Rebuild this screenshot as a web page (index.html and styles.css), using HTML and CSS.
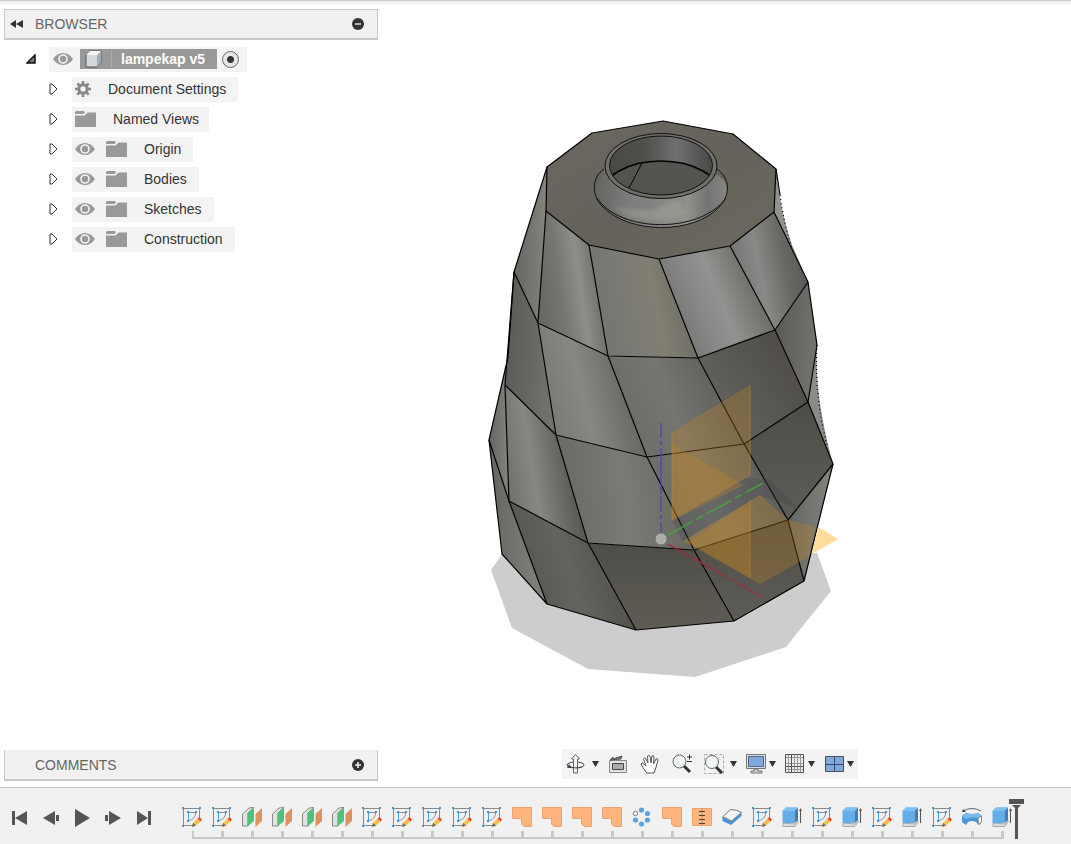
FILE: index.html
```html
<!DOCTYPE html>
<html lang="en">

<head>
  <meta charset="UTF-8">
  <meta name="viewport" content="width=device-width, initial-scale=1.0">
  <title>lampekap v5</title>
  <link rel="stylesheet" href="styles.css">
</head>

<body>
  <!-- Icon definitions -->
  <svg class="defs" width="0" height="0" aria-hidden="true">
    <symbol id="eye" viewBox="0 0 20 14">
      <path d="M0 7C5-1 15-1 20 7C15 15 5 15 0 7Z" fill="#999" />
      <circle cx="10" cy="7" r="4" fill="none" stroke="#f3f3f3" stroke-width="1.600" />
      <circle cx="10" cy="7" r="1.800" fill="#999" />
    </symbol>
    <symbol id="folder" viewBox="0 0 22 16">
      <path d="M0 1.500Q0 0 1.500 0H9L10 1.500L8.500 3H0Z" fill="#999" />
      <path d="M0 4.500H9.500L12.500 1.500H21V16H0Z" fill="#999" />
    </symbol>
    <symbol id="closed" viewBox="0 0 9 12">
      <path d="M1 1V11H3L8 6L3 1Z" fill="#fff" stroke="#333" />
    </symbol>
    <symbol id="sketch" viewBox="0 0 20 20">
      <path d="M1.500 1.500H17.500V11M1.500 1.500V18.500H11" fill="none" stroke="#8a8a8a" />
      <path d="M6.500 5.500H13.500C13.500 10 11 13 6.500 13.500Z" fill="none" stroke="#8a8a8a" />
      <path d="M6.500 6V13" stroke="#4aa3e8" />
      <path d="M0 0h2v2h-2zM17 0h2v2h-2zM0 18h2v2h-2zM5 4h2v2h-2zM13 4h2v2h-2zM5 13h2v2h-2z" fill="#3b97e3" />
      <path d="M10 20L11 16L16 11L19 14L14 18.500Z" fill="#f3c04d" />
      <path d="M10 20L11 16L14 18.500Z" fill="#666" />
      <path d="M15.500 11.500L17.500 10L20 12.500L18.500 14.500Z" fill="#e8453c" />
    </symbol>
    <symbol id="plane" viewBox="0 0 20 20">
      <path d="M.500 7L7 1L12 .500L6 6V19H.500Z" fill="#e2e2e2" stroke="#888" />
      <path d="M5.500 6L12 .500V14L5.500 19.500Z" fill="#4fc17c" />
      <path d="M13.500 7L20 1V14L13.500 20Z" fill="#dc9360" />
    </symbol>
    <symbol id="flange" viewBox="0 0 20 20">
      <path d="M.500 .500H19.500V19.500H12L9.500 17V11.500H.500Z" fill="#ffb47d" stroke="#eba373" />
    </symbol>
    <symbol id="pattern" viewBox="0 0 20 20">
      <g fill="#5ba5d9">
        <circle cx="9.500" cy="3" r="2.600" />
        <circle cx="15.500" cy="6.500" r="2.600" />
        <circle cx="15.500" cy="13" r="2.600" />
        <circle cx="9.500" cy="17" r="2.600" />
        <circle cx="3.500" cy="13" r="2.600" />
      </g>
      <circle cx="3.500" cy="6.500" r="2.200" fill="#fff" stroke="#777" />
    </symbol>
    <symbol id="stitch" viewBox="0 0 20 20">
      <path d="M.500 1.500H19.500V18.500H.500Z" fill="#ffb47d" stroke="#eba373" />
      <path d="M10 1V19" stroke="#d89060" />
      <path d="M7 4.500H13M7 8.500H13M7 12.500H13M7 16.500H13" stroke="#444" />
    </symbol>
    <symbol id="shell" viewBox="0 0 20 20">
      <path d="M.500 10V14L9 18L19.500 9V5.500L9 14Z" fill="#4a96d4" />
      <path d="M.500 10L8.500 2.500Q15 2.500 19.500 5.500L9.500 14Q5 11 .500 10Z" fill="#f5f5f5" stroke="#777" />
    </symbol>
    <symbol id="extrude" viewBox="0 0 20 20">
      <path d="M1 16L13 17L16 13V15L13 19.500H1Z" fill="#ddd" stroke="#aaa" />
      <path d="M.500 4L4 .500H16L12.500 4V16H.500Z" fill="#62adea" />
      <path d="M12.500 4L16 .500V13L12.500 16Z" fill="#3d80bd" />
      <path d="M.500 4L4 .500H16L12.500 4Z" fill="#7fc0f2" />
      <path d="M18.500 2V16" stroke="#555" />
      <path d="M17 4L18.500 1L20 4Z" fill="#555" />
    </symbol>
    <symbol id="bend" viewBox="0 0 20 20">
      <path d="M1 4Q10-1 19 4" fill="none" stroke="#666" />
      <path d="M0 5L1 2L4 5Z" fill="#444" />
      <path d="M0 9L4 6Q10 8 16 6L20 9V15L17 18L14 15Q10 13 6 15L4 18L0 15Z" fill="#4a96d4" />
      <path d="M0 9L4 6Q10 8 16 6L20 9L16 11Q10 9 4 12Z" fill="#76bbef" />
      <path d="M16 11L19.500 9V15L16.500 17.500Z" fill="#fff" stroke="#888" />
    </symbol>
    <symbol id="caret" viewBox="0 0 7 6">
      <path d="M0 0H7L3.500 6Z" fill="#333" />
    </symbol>
  </svg>

  <main class="workspace">
    <aside class="sidebar">
      <section class="browser">
        <header class="panel-bar">
          <button class="icon-button collapse" aria-label="Collapse browser">
            <svg width="13" height="8" viewBox="0 0 13 8"><path d="M6 0V8L0 4ZM13 0V8L6 4Z" fill="#333" /></svg>
          </button>
          <h2>BROWSER</h2>
          <button class="icon-button" aria-label="Hide browser">
            <svg width="12" height="12" viewBox="0 0 12 12"><circle cx="6" cy="6" r="6" fill="#333" /><path d="M3 6H9" stroke="#ddd" stroke-width="1.500" /></svg>
          </button>
        </header>

        <ul class="tree">
          <li class="root">
            <button class="icon-button toggle" aria-label="Collapse lampekap v5">
              <svg width="10" height="10" viewBox="0 0 10 10"><path d="M1 9H9V1Z" fill="#777" stroke="#111" stroke-width="1.500" /></svg>
            </button>
            <div class="node">
              <button class="icon-button" aria-label="Show or hide"><svg width="20" height="14"><use href="#eye" /></svg></button>
              <label class="document" for="active">
                <span class="cube">
                  <svg width="18" height="18" viewBox="0 0 18 18">
                    <path d="M1 5L5 1H16V12L12 17H1Z" fill="#d5d9dc" stroke="#555" />
                    <path d="M12 5L16 1V12L12 17Z" fill="#a4abb0" />
                    <path d="M1 5L5 1H16L12 5Z" fill="#f4f4f4" />
                  </svg>
                </span>
                <span class="title">lampekap v5</span>
              </label>
              <input type="radio" id="active" name="active" checked>
            </div>
          </li>
          <li>
            <button class="icon-button toggle" aria-label="Expand Document Settings"><svg width="9" height="12"><use href="#closed" /></svg></button>
            <div class="node settings">
              <svg width="16" height="16" viewBox="0 0 16 16">
                <circle cx="8" cy="8" r="4.200" fill="none" stroke="#888" stroke-width="3" />
                <path d="M8 0V3M8 13V16M0 8H3M13 8H16M2.300 2.300L4.500 4.500M11.500 11.500L13.700 13.700M2.300 13.700L4.500 11.500M11.500 4.500L13.700 2.300" stroke="#888" stroke-width="2.600" />
              </svg>
              <span>Document Settings</span>
            </div>
          </li>
          <li>
            <button class="icon-button toggle" aria-label="Expand Named Views"><svg width="9" height="12"><use href="#closed" /></svg></button>
            <div class="node views">
              <svg width="22" height="16"><use href="#folder" /></svg>
              <span>Named Views</span>
            </div>
          </li>
          <li>
            <button class="icon-button toggle" aria-label="Expand Origin"><svg width="9" height="12"><use href="#closed" /></svg></button>
            <div class="node">
              <button class="icon-button" aria-label="Show or hide Origin"><svg width="20" height="14"><use href="#eye" /></svg></button>
              <svg width="22" height="16"><use href="#folder" /></svg>
              <span>Origin</span>
            </div>
          </li>
          <li>
            <button class="icon-button toggle" aria-label="Expand Bodies"><svg width="9" height="12"><use href="#closed" /></svg></button>
            <div class="node">
              <button class="icon-button" aria-label="Show or hide Bodies"><svg width="20" height="14"><use href="#eye" /></svg></button>
              <svg width="22" height="16"><use href="#folder" /></svg>
              <span>Bodies</span>
            </div>
          </li>
          <li>
            <button class="icon-button toggle" aria-label="Expand Sketches"><svg width="9" height="12"><use href="#closed" /></svg></button>
            <div class="node">
              <button class="icon-button" aria-label="Show or hide Sketches"><svg width="20" height="14"><use href="#eye" /></svg></button>
              <svg width="22" height="16"><use href="#folder" /></svg>
              <span>Sketches</span>
            </div>
          </li>
          <li>
            <button class="icon-button toggle" aria-label="Expand Construction"><svg width="9" height="12"><use href="#closed" /></svg></button>
            <div class="node">
              <button class="icon-button" aria-label="Show or hide Construction"><svg width="20" height="14"><use href="#eye" /></svg></button>
              <svg width="22" height="16"><use href="#folder" /></svg>
              <span>Construction</span>
            </div>
          </li>
        </ul>
      </section>

      <section class="panel-bar comments">
        <h2>COMMENTS</h2>
        <button class="icon-button" aria-label="Show comments">
          <svg width="12" height="12" viewBox="0 0 12 12"><circle cx="6" cy="6" r="6" fill="#333" /><path d="M3 6H9M6 3V9" stroke="#f0f0f0" stroke-width="1.600" /></svg>
        </button>
      </section>
    </aside>

    <section class="stage">
      <svg class="model" viewBox="470 100 380 600" role="img" aria-label="Faceted lamp shade model">
        <defs>
          <linearGradient id="gTop" x1="0" y1="0" x2="1" y2="1"><stop offset="0" stop-color="#6c6962" /><stop offset=".5" stop-color="#65625b" /><stop offset="1" stop-color="#6c695f" /></linearGradient>
          <linearGradient id="gA" x1="0" y1="0" x2="1" y2="0"><stop offset="0" stop-color="#646461" /><stop offset="1" stop-color="#85857f" /></linearGradient>
          <linearGradient id="gB" x1="0" y1=".6" x2="1" y2=".3"><stop offset="0" stop-color="#666662" /><stop offset=".3" stop-color="#757572" /><stop offset=".58" stop-color="#8d8d8a" /><stop offset=".8" stop-color="#72726e" /><stop offset="1" stop-color="#5f5f5b" /></linearGradient>
          <linearGradient id="gC" x1="0" y1=".6" x2="1" y2=".4"><stop offset="0" stop-color="#737370" /><stop offset=".35" stop-color="#7b7a74" /><stop offset=".6" stop-color="#817e72" /><stop offset="1" stop-color="#6b6963" /></linearGradient>
          <linearGradient id="gD" x1="0" y1=".6" x2="1" y2=".2"><stop offset="0" stop-color="#6e6e6b" /><stop offset=".3" stop-color="#868684" /><stop offset=".5" stop-color="#929290" /><stop offset=".75" stop-color="#73736f" /><stop offset="1" stop-color="#575652" /></linearGradient>
          <linearGradient id="gE" x1="0" y1=".5" x2="1" y2=".2"><stop offset="0" stop-color="#70706d" /><stop offset=".35" stop-color="#898a87" /><stop offset=".65" stop-color="#696965" /><stop offset="1" stop-color="#53524d" /></linearGradient>
          <linearGradient id="gF" x1="0" y1="0" x2="1" y2=".2"><stop offset="0" stop-color="#585955" /><stop offset="1" stop-color="#71726e" /></linearGradient>
          <linearGradient id="gG" x1="0" y1=".6" x2="1" y2=".3"><stop offset="0" stop-color="#777672" /><stop offset=".4" stop-color="#878783" /><stop offset=".7" stop-color="#70706b" /><stop offset="1" stop-color="#5c5b57" /></linearGradient>
          <linearGradient id="gH" x1="0" y1=".6" x2="1" y2=".3"><stop offset="0" stop-color="#696965" /><stop offset=".45" stop-color="#757571" /><stop offset="1" stop-color="#585753" /></linearGradient>
          <linearGradient id="gI" x1="0" y1=".9" x2="1" y2=".2"><stop offset="0" stop-color="#686762" /><stop offset="1" stop-color="#4d4a45" /></linearGradient>
          <linearGradient id="gK" x1="0" y1=".7" x2="1" y2=".4"><stop offset="0" stop-color="#6c6c68" /><stop offset=".35" stop-color="#878784" /><stop offset=".65" stop-color="#676763" /><stop offset="1" stop-color="#474641" /></linearGradient>
          <linearGradient id="gL" x1="0" y1=".5" x2="1" y2=".4"><stop offset="0" stop-color="#696964" /><stop offset=".5" stop-color="#7b7b76" /><stop offset="1" stop-color="#65645f" /></linearGradient>
          <linearGradient id="gN" x1="0" y1="0" x2="0" y2="1"><stop offset="0" stop-color="#4f4d48" /><stop offset="1" stop-color="#5d5c57" /></linearGradient>
          <linearGradient id="gO" x1="0" y1=".6" x2="1" y2=".3"><stop offset="0" stop-color="#53524c" /><stop offset=".45" stop-color="#64645f" /><stop offset="1" stop-color="#4a4843" /></linearGradient>
          <linearGradient id="gP" x1="0" y1="0" x2="0" y2="1"><stop offset="0" stop-color="#4f4d47" /><stop offset="1" stop-color="#5e5c55" /></linearGradient>
          <linearGradient id="gNeck" x1="0" y1="0" x2="1" y2="0"><stop offset="0" stop-color="#63635f" /><stop offset=".25" stop-color="#7b7d7b" /><stop offset=".5" stop-color="#858583" /><stop offset=".7" stop-color="#90908c" /><stop offset=".85" stop-color="#737572" /><stop offset="1" stop-color="#878783" /></linearGradient>
          <linearGradient id="gHole" x1="0" y1="0" x2="1" y2="0"><stop offset="0" stop-color="#484844" /><stop offset=".35" stop-color="#50504d" /><stop offset=".65" stop-color="#6f7170" /><stop offset="1" stop-color="#484846" /></linearGradient>
          <clipPath id="hole"><ellipse cx="661" cy="165.500" rx="51.500" ry="29.500" /></clipPath>
          <filter id="soft"><feGaussianBlur stdDeviation="2" /></filter>
        </defs>

        <!-- ground shadow -->
        <path d="M502 554L491 570L512 628L588 669L695 677L786 647L831 591L817 553Z" fill="#cdcdcd" />

        <!-- rounded edges behind the front faces -->
        <path d="M776 169Q780 210 792 245L808 282L774 212Z" fill="#92938e" />
        <path d="M817 345Q814 395 833 464L808 402Z" fill="#8b8c87" />

        <g class="faces">
          <path fill="url(#gA)" d="M547 167L546 211L538 323L514 272Z" />
          <path fill="url(#gB)" d="M546 211L589 245L608 356L538 323Z" />
          <path fill="url(#gC)" d="M589 245L659 259L698 358L608 356Z" />
          <path fill="url(#gD)" d="M659 259L730 246L775 330L698 358Z" />
          <path fill="url(#gE)" d="M730 246L774 212L808 282L775 330Z" />
          <path fill="url(#gF)" d="M514 272L538 323L556 435L505 385Z" />
          <path fill="url(#gG)" d="M538 323L608 356L647 457L556 435Z" />
          <path fill="url(#gH)" d="M608 356L698 358L744 444L647 457Z" />
          <path fill="url(#gI)" d="M698 358L775 330L808 402L744 444Z" />
          <path fill="url(#gF)" d="M775 330L808 282L817 345L808 402Z" />
          <path fill="url(#gA)" d="M508 357L505 385L509 501L489 440Z" />
          <path fill="url(#gK)" d="M505 385L556 435L588 543L509 501Z" />
          <path fill="url(#gL)" d="M556 435L647 457L694 550L588 543Z" />
          <path fill="url(#gH)" d="M647 457L744 444L788 520L694 550Z" />
          <path fill="url(#gN)" d="M744 444L808 402L833 464L788 520Z" />
          <path fill="url(#gA)" d="M489 440L509 501L547 604L502 554Z" />
          <path fill="url(#gO)" d="M509 501L588 543L636 630L547 604Z" />
          <path fill="url(#gP)" d="M588 543L694 550L734 621L636 630Z" />
          <path fill="url(#gN)" d="M694 550L788 520L804 581L734 621Z" />
          <path fill="url(#gA)" d="M833 464L804 581L788 520Z" />
          <path fill="url(#gTop)" d="M663 121L733 134L776 169L774 212L730 246L659 259L589 245L546 211L547 167L592 133Z" />
        </g>

        <!-- neck and opening -->
        <path d="M605 175C592 181 591 197 602 206C629 235 695 234 719 207C731 196 730 182 717 175Z" fill="url(#gNeck)" />
        <path d="M612 206Q632 212 655 210Q672 199 681 202Q680 210 690 212Q676 221 660 221Q632 220 612 206Z" fill="#a09d94" opacity=".6" filter="url(#soft)" />
        <path d="M604 169C592 177 591 195 602 206C629 235 695 234 719 207C731 195 730 178 717 169" fill="none" stroke="#111" />
        <path d="M597 198C620 233 700 234 726 198" fill="none" stroke="#111" />
        <ellipse cx="661" cy="166" rx="56" ry="32.500" fill="#706f6a" stroke="#111" />
        <ellipse cx="661" cy="165.500" rx="51.500" ry="29.500" fill="url(#gHole)" />
        <g clip-path="url(#hole)">
          <ellipse cx="661" cy="196" rx="60" ry="35" fill="#55534f" stroke="#000" stroke-width="1.600" />
          <path d="M642 163L629 188" stroke="#000" />
        </g>
        <ellipse cx="661" cy="165.500" rx="51.500" ry="29.500" fill="none" stroke="#111" />

        <!-- model edges -->
        <g fill="none" stroke="#000" stroke-width="1.200" stroke-linejoin="round">
          <path d="M663 121L733 134L776 169L774 212L730 246L659 259L589 245L546 211L547 167L592 133Z" />
          <path d="M547 167L514 272L508 357L489 440L502 554L547 604L636 630L734 621L804 581L833 464L808 402L817 345L808 282L774 212" />
          <path d="M776 169L780 195" />
          <path d="M514 272L538 323L608 356L698 358L775 330L808 282" />
          <path d="M505 385L556 435L647 457L744 444L808 402" />
          <path d="M509 501L588 543L694 550L788 520L833 464" />
          <path d="M514 272L505 385L509 501" />
          <path d="M489 440L509 501L547 604" />
          <path d="M546 211L538 323L556 435L588 543L636 630" />
          <path d="M589 245L608 356L647 457L694 550L734 621" />
          <path d="M659 259L698 358L744 444L788 520L804 581" />
          <path d="M730 246L775 330L808 402" />
          <path d="M780 195Q784 225 792 248M817 345Q814 395 827 445" stroke-dasharray="1 3" />
        </g>

        <!-- construction planes -->
        <path d="M672 521L746 478L770 480L800 510L760 495L683 541Z" fill="#41404a" opacity=".25" />
        <g fill="#c98a1c" fill-opacity=".28">
          <path d="M672 432L750 385V476L672 520Z" />
          <path d="M672 444L744 485L672 521Z" />
          <path d="M814 526L788 520L760 495L683 541L760 584L810 556Z" />
          <path d="M688 542L750 502V578Z" />
        </g>
        <path d="M818 527L838 539L812 554Z" fill="#ffdc9c" />
        <path d="M672 432V520M750 385V476M750 500V578" stroke="#b88b37" opacity=".6" />

        <!-- origin axes -->
        <path d="M661 423V535" stroke="#4a44b8" stroke-width="1.600" stroke-dasharray="15 3 4 3 46 3" opacity=".8" />
        <path d="M668 535L763 483" stroke="#3fae35" stroke-width="1.600" stroke-dasharray="28 4 8 4" opacity=".75" />
        <path d="M668 544L762 597" stroke="#a52a35" stroke-width="1.500" stroke-dasharray="24 2 42 3 5 3" opacity=".8" />
        <circle cx="661" cy="539" r="6" fill="#aeafac" stroke="#727270" />
      </svg>

      <nav class="view-tools" aria-label="View tools">
        <button class="menu wide" aria-label="Orbit">
          <svg width="20" height="20" viewBox="0 0 20 20">
            <ellipse cx="9.500" cy="11" rx="8.500" ry="3" fill="none" stroke="#445" />
            <path d="M7.500 19V5H5.500L9.500 .500L13.500 5H11.500V19Z" fill="#f4f4f4" stroke="#666" />
            <path d="M4 13Q10 15 16 13" fill="none" stroke="#445" />
            <path d="M3 10L1 14L6 14Z" fill="#445" />
          </svg>
          <svg width="7" height="6"><use href="#caret" /></svg>
        </button>
        <button class="tool" aria-label="Look at">
          <svg width="20" height="20" viewBox="0 0 20 20">
            <path d="M1.500 6.500H18.500V18.500H1.500Z" fill="#e2e2e2" stroke="#888" />
            <path d="M4.500 9.500H15.500V15.500H4.500Z" fill="#aaa" stroke="#444" />
            <path d="M2 6L5 3V5L14 2L13 5Z" fill="#777" stroke="#555" />
          </svg>
        </button>
        <button class="tool" aria-label="Pan">
          <svg width="20" height="20" viewBox="0 0 20 20">
            <path d="M6 18Q3 14 1 10Q2 8 4 10L6 12L3.500 5Q4.500 3 6 5L8 9L7.500 2Q9 .500 10 2L11 9L12 2Q13.500 .500 14 3L13.500 10L16 5Q18 4 18 6L15.500 15L14 19H7Z" fill="#fff" stroke="#555" />
          </svg>
        </button>
        <button class="tool" aria-label="Zoom">
          <svg width="20" height="20" viewBox="0 0 20 20">
            <path d="M12 12L18 18" stroke="#333" stroke-width="3" />
            <circle cx="7.500" cy="7.500" r="6.500" fill="#f3f7fa" stroke="#666" />
            <path d="M15 3H20M17.500 .500V5.500M15 7.500H20" stroke="#333" />
          </svg>
        </button>
        <button class="menu wide" aria-label="Zoom window">
          <svg width="20" height="20" viewBox="0 0 20 20">
            <path d="M.500 .500H19.500V19.500H.500Z" fill="none" stroke="#aaa" stroke-dasharray="3 2" />
            <path d="M12 13L18 19" stroke="#333" stroke-width="3" />
            <circle cx="8" cy="8" r="6.500" fill="#f3f7fa" stroke="#666" />
          </svg>
          <svg width="7" height="6"><use href="#caret" /></svg>
        </button>
        <button class="menu" aria-label="Display settings">
          <svg width="20" height="20" viewBox="0 0 20 20">
            <path d="M.500 .500H19.500V14.500H.500Z" fill="#ddd" stroke="#777" />
            <path d="M2.500 2.500H17.500V12.500H2.500Z" fill="#82a9dc" stroke="#4b6894" />
            <path d="M8 15H12V17H16V19H5V17H8Z" fill="#ccc" stroke="#777" />
          </svg>
          <svg width="7" height="6"><use href="#caret" /></svg>
        </button>
        <button class="menu" aria-label="Grid and snaps">
          <svg width="20" height="20" viewBox="0 0 20 20">
            <path d="M.500 .500H18.500V18.500H.500Z" fill="#eee" stroke="#555" />
            <path d="M3.500 1V18M9.500 1V18M12.500 1V18M15.500 1V18M1 3.500H18M1 9.500H18M1 12.500H18M1 15.500H18" stroke="#999" />
            <path d="M6.500 1V18M1 12.500H18" stroke="#555" />
          </svg>
          <svg width="7" height="6"><use href="#caret" /></svg>
        </button>
        <button class="menu" aria-label="Viewports">
          <svg width="20" height="20" viewBox="0 0 20 20">
            <path d="M1.500 2.500H19.500V17.500H1.500Z" fill="#82a9dc" stroke="#46505e" />
            <path d="M10.500 3V17M2 10.500H19" stroke="#34496b" />
          </svg>
          <svg width="7" height="6"><use href="#caret" /></svg>
        </button>
      </nav>
    </section>
  </main>

  <footer class="timeline">
    <div class="playback">
      <button class="icon-button" aria-label="Go to start"><svg width="16" height="18" viewBox="0 0 16 18"><path d="M0 2H3V16H0ZM15 2V16L3 9Z" fill="#555" /></svg></button>
      <button class="icon-button" aria-label="Step back"><svg width="16" height="18" viewBox="0 0 16 18"><path d="M12 2V16L0 9ZM13 6H16V12H13Z" fill="#555" /></svg></button>
      <button class="icon-button" aria-label="Play"><svg width="16" height="18" viewBox="0 0 16 18"><path d="M1 0L16 9L1 18Z" fill="#555" /></svg></button>
      <button class="icon-button" aria-label="Step forward"><svg width="16" height="18" viewBox="0 0 16 18"><path d="M0 6H3V12H0ZM4 2L16 9L4 16Z" fill="#555" /></svg></button>
      <button class="icon-button" aria-label="Go to end"><svg width="16" height="18" viewBox="0 0 16 18"><path d="M1 2L12 9L1 16ZM12 2H15V16H12Z" fill="#555" /></svg></button>
    </div>
    <ol class="features">
      <li><button class="icon-button" aria-label="Sketch"><svg width="20" height="20"><use href="#sketch" /></svg></button></li>
      <li><button class="icon-button" aria-label="Sketch"><svg width="20" height="20"><use href="#sketch" /></svg></button></li>
      <li><button class="icon-button" aria-label="Plane"><svg width="20" height="20"><use href="#plane" /></svg></button></li>
      <li><button class="icon-button" aria-label="Plane"><svg width="20" height="20"><use href="#plane" /></svg></button></li>
      <li><button class="icon-button" aria-label="Plane"><svg width="20" height="20"><use href="#plane" /></svg></button></li>
      <li><button class="icon-button" aria-label="Plane"><svg width="20" height="20"><use href="#plane" /></svg></button></li>
      <li><button class="icon-button" aria-label="Sketch"><svg width="20" height="20"><use href="#sketch" /></svg></button></li>
      <li><button class="icon-button" aria-label="Sketch"><svg width="20" height="20"><use href="#sketch" /></svg></button></li>
      <li><button class="icon-button" aria-label="Sketch"><svg width="20" height="20"><use href="#sketch" /></svg></button></li>
      <li><button class="icon-button" aria-label="Sketch"><svg width="20" height="20"><use href="#sketch" /></svg></button></li>
      <li><button class="icon-button" aria-label="Sketch"><svg width="20" height="20"><use href="#sketch" /></svg></button></li>
      <li><button class="icon-button" aria-label="Patch"><svg width="20" height="20"><use href="#flange" /></svg></button></li>
      <li><button class="icon-button" aria-label="Patch"><svg width="20" height="20"><use href="#flange" /></svg></button></li>
      <li><button class="icon-button" aria-label="Patch"><svg width="20" height="20"><use href="#flange" /></svg></button></li>
      <li><button class="icon-button" aria-label="Patch"><svg width="20" height="20"><use href="#flange" /></svg></button></li>
      <li><button class="icon-button" aria-label="Circular pattern"><svg width="20" height="20"><use href="#pattern" /></svg></button></li>
      <li><button class="icon-button" aria-label="Patch"><svg width="20" height="20"><use href="#flange" /></svg></button></li>
      <li><button class="icon-button" aria-label="Stitch"><svg width="20" height="20"><use href="#stitch" /></svg></button></li>
      <li><button class="icon-button" aria-label="Shell"><svg width="20" height="20"><use href="#shell" /></svg></button></li>
      <li><button class="icon-button" aria-label="Sketch"><svg width="20" height="20"><use href="#sketch" /></svg></button></li>
      <li><button class="icon-button" aria-label="Extrude"><svg width="20" height="20"><use href="#extrude" /></svg></button></li>
      <li><button class="icon-button" aria-label="Sketch"><svg width="20" height="20"><use href="#sketch" /></svg></button></li>
      <li><button class="icon-button" aria-label="Extrude"><svg width="20" height="20"><use href="#extrude" /></svg></button></li>
      <li><button class="icon-button" aria-label="Sketch"><svg width="20" height="20"><use href="#sketch" /></svg></button></li>
      <li><button class="icon-button" aria-label="Extrude"><svg width="20" height="20"><use href="#extrude" /></svg></button></li>
      <li><button class="icon-button" aria-label="Sketch"><svg width="20" height="20"><use href="#sketch" /></svg></button></li>
      <li><button class="icon-button" aria-label="Revolve"><svg width="20" height="20"><use href="#bend" /></svg></button></li>
      <li>
        <button class="icon-button" aria-label="Extrude"><svg width="20" height="20"><use href="#extrude" /></svg></button>
        <svg class="marker" width="16" height="40" viewBox="0 0 16 40"><path d="M0 0H15V5H0ZM3 6H12L9 9V40H6V9Z" fill="#555" /></svg>
      </li>
    </ol>
  </footer>
</body>

</html>
```
FILE: styles.css
```css
* {
  box-sizing: border-box;
}

body {
  display: flex;
  flex-direction: column;
  min-height: 100vh;
  margin: 0;
  font-family: "Liberation Sans", Arial, sans-serif;
  font-size: 14px;
  line-height: 16px;
  color: #333;
  background-color: #fff;
}

svg {
  display: block;
  flex: none;
}

button {
  font: inherit;
  color: inherit;
  cursor: pointer;
}

ul,
ol {
  list-style: none;
  margin: 0;
  padding: 0;
}

.defs {
  position: absolute;
}

.icon-button {
  padding: 0;
  border: none;
  background: none;
}

/* Workspace */
.workspace {
  display: flex;
  flex: 1;
  border-top: 1px solid #ccc;
  box-shadow: inset 0 3px #f1f1f1;
}

.sidebar {
  display: flex;
  flex-direction: column;
  justify-content: space-between;
  flex: 0 0 378px;
  padding: 8px 0 6px 4px;
}

.panel-bar {
  display: flex;
  align-items: center;
  height: 31px;
  padding: 0 13px 0 5px;
  border: 1px solid #c8c8c8;
  border-bottom-width: 2px;
  background-color: #f1f1f1;
}

.panel-bar h2 {
  flex: 1;
  margin: 0;
  font-size: 14px;
  font-weight: normal;
  color: #666;
}

.collapse {
  width: 25px;
}

.comments {
  padding-left: 30px;
  border-top: none;
}

/* Browser tree */
.tree {
  display: flex;
  flex-direction: column;
  gap: 4px;
  padding: 6px 0 0 45px;
}

.tree li {
  display: flex;
  align-items: center;
  height: 26px;
}

.tree .root {
  margin-left: -23px;
}

.toggle {
  width: 23px;
}

.root .node {
  gap: 7px;
  padding: 0 8px 0 4px;
}

.node {
  display: flex;
  align-items: center;
  gap: 11px;
  height: 25px;
  padding: 0 12px 0 3px;
  background-color: #f3f3f3;
}

.node span {
  margin-left: 5px;
}

.settings {
  gap: 12px;
}

.views {
  padding-right: 10px;
}

.document {
  display: flex;
  align-items: center;
  height: 20px;
  background-color: #999;
  color: #fff;
  font-weight: bold;
}

.document .cube {
  margin: 0;
  padding: 0 8px 0 5px;
  border-right: 1px solid #aaa;
}

.document .title {
  margin: 0;
  padding: 0 12px 0 9px;
}

input[type="radio"] {
  appearance: none;
  width: 17px;
  height: 17px;
  margin: 0 0 0 -2px;
  border: 1px solid #666;
  border-radius: 50%;
  background: radial-gradient(circle, #333 3px, #e4e6e8 4px);
}

/* Model view */
.stage {
  display: flex;
  flex-direction: column;
  justify-content: space-between;
  flex: 1;
  padding: 99px 0 8px 92px;
}

.model {
  width: 380px;
  height: 600px;
}

.view-tools {
  display: flex;
  align-items: center;
  align-self: flex-start;
  gap: 9px;
  height: 30px;
  margin-left: 92px;
  padding: 0 4px;
  background-color: #f3f3f3;
}

.view-tools button {
  display: flex;
  align-items: center;
  padding: 0;
  border: none;
  background: none;
}

.view-tools .tool {
  padding-right: 3px;
}

.menu {
  gap: 3px;
}

.wide {
  gap: 6px;
}

/* Timeline */
.timeline {
  display: flex;
  height: 57px;
  border-top: 1px solid #ccc;
  background-color: #f1f1f1;
}

.playback {
  display: flex;
  align-items: center;
  gap: 15px;
  flex: 0 0 177px;
  height: 60px;
  padding-left: 12px;
}

.features {
  display: flex;
  padding-top: 19px;
}

.features li {
  position: relative;
  width: 30px;
  height: 32px;
  padding-left: 5px;
  border-bottom: 2px solid #c8c8c8;
}

/* Tick that joins each feature to the line */
.features li::after {
  content: "";
  position: absolute;
  left: 14px;
  bottom: 0;
  width: 3px;
  height: 6px;
  background-color: #c8c8c8;
}

.features li:first-child {
  width: 15px;
  margin-left: 15px;
  padding-left: 0;
}

.features li:first-child .icon-button {
  margin-left: -10px;
}

.features li:first-child::after {
  left: 0;
  width: 2px;
}

.features li:last-child {
  width: 17px;
}

.marker {
  position: absolute;
  left: 22px;
  top: -8px;
}
```
